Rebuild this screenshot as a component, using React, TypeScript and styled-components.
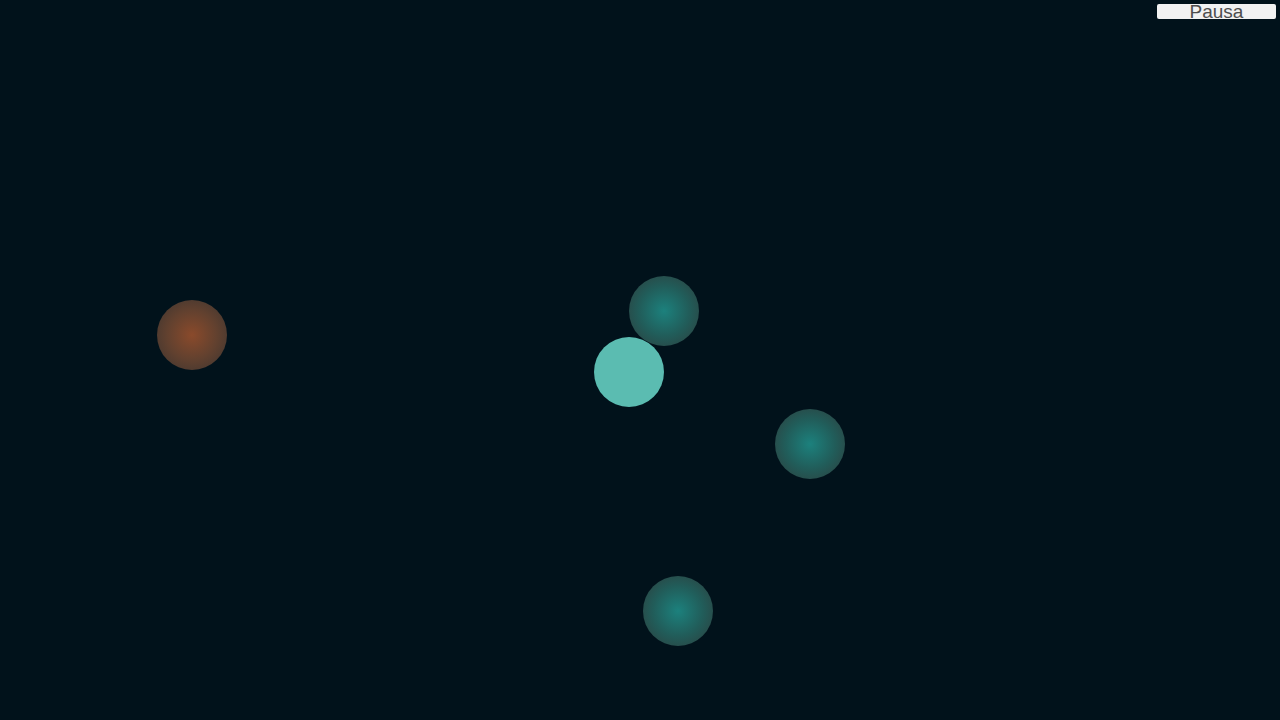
import React from "react";
import styled, { createGlobalStyle } from "styled-components";

const Global = createGlobalStyle`
  html, body { margin: 0; padding: 0; background: #01121b; }
  #root { width: 100vw; height: 100vh; }
`;

const Stage = styled.div`
  position: relative;
  width: 1280px;
  height: 720px;
  background: #01121b;
  overflow: hidden;
  font-family: "Liberation Sans", Arial, sans-serif;
`;

const PauseButton = styled.button`
  position: absolute;
  top: 4px;
  right: 4px;
  width: 119px;
  height: 15px;
  padding: 0;
  border: none;
  border-radius: 2px;
  background: #f2f2f2;
  color: #4e4e4e;
  font-family: "Liberation Sans", Arial, sans-serif;
  font-size: 19px;
  line-height: 15px;
  text-align: center;
  overflow: visible;
  cursor: pointer;
`;

type Kind = "orange" | "teal" | "solid";

const Ball = styled.div<{ $kind: Kind }>`
  position: absolute;
  width: 70px;
  height: 70px;
  border-radius: 50%;
  margin: -35px 0 0 -35px;
  background: ${({ $kind }) =>
    $kind === "orange"
      ? "radial-gradient(circle at 50% 50%, #8a4a2b 0%, #62412f 50%, #383330 100%)"
      : $kind === "teal"
      ? "radial-gradient(circle at 50% 50%, #1c817d 0%, #215d5a 50%, #2e3b3a 100%)"
      : "#5bbcb1"};
`;

const balls: { x: number; y: number; kind: Kind }[] = [
  { x: 191.5, y: 335, kind: "orange" },
  { x: 663.5, y: 311, kind: "teal" },
  { x: 628.5, y: 372, kind: "solid" },
  { x: 809.5, y: 444, kind: "teal" },
  { x: 677.5, y: 611, kind: "teal" },
];

export default function App() {
  return (
    <>
      <Global />
      <Stage>
        {balls.map((b, i) => (
          <Ball key={i} $kind={b.kind} style={{ left: b.x, top: b.y }} />
        ))}
        <PauseButton>Pausa</PauseButton>
      </Stage>
    </>
  );
}
